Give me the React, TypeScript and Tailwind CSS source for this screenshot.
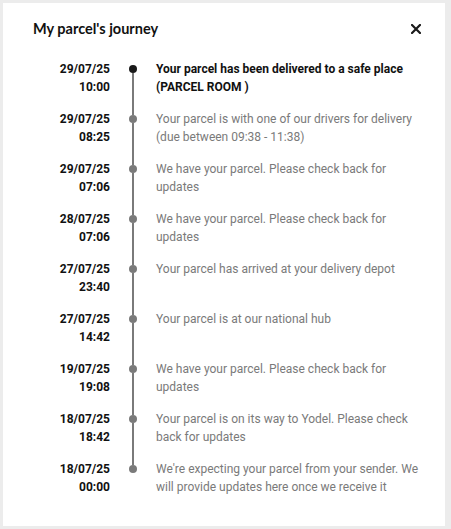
const events = [
  { date: "29/07/25", time: "10:00", text: "Your parcel has been delivered to a safe place (PARCEL ROOM )" },
  { date: "29/07/25", time: "08:25", text: "Your parcel is with one of our drivers for delivery (due between 09:38 - 11:38)" },
  { date: "29/07/25", time: "07:06", text: "We have your parcel. Please check back for updates" },
  { date: "28/07/25", time: "07:06", text: "We have your parcel. Please check back for updates" },
  { date: "27/07/25", time: "23:40", text: "Your parcel has arrived at your delivery depot" },
  { date: "27/07/25", time: "14:42", text: "Your parcel is at our national hub" },
  { date: "19/07/25", time: "19:08", text: "We have your parcel. Please check back for updates" },
  { date: "18/07/25", time: "18:42", text: "Your parcel is on its way to Yodel. Please check back for updates" },
  { date: "18/07/25", time: "00:00", text: "We're expecting your parcel from your sender. We will provide updates here once we receive it" },
];

export default function App() {
  return (
    <div className="min-h-screen bg-[#ececec] p-[3px] pb-[5px] font-['Roboto',sans-serif]">
      <div className="w-[442px] bg-white pl-[30px] pr-6 pt-4 pb-4">
        <div className="flex h-5 items-center justify-between">
          <h2 className="font-['Lato',sans-serif] text-[14.5px] font-bold leading-5 text-[#111]">
            My parcel's journey
          </h2>
          <button type="button" className="flex h-5 w-5 items-center justify-end" aria-label="Close">
            <svg width="10" height="10" viewBox="0 0 10 10">
              <path d="M1 1 L9 9 M9 1 L1 9" stroke="#1a1a1a" strokeWidth="2.2" strokeLinecap="square" />
            </svg>
          </button>
        </div>

        <ol className="mt-[21px]">
          {events.map((ev, i) => (
            <TimelineRow
              key={i}
              date={ev.date}
              time={ev.time}
              text={ev.text}
              first={i === 0}
              last={i === events.length - 1}
            />
          ))}
        </ol>
      </div>
    </div>
  );
}

function TimelineRow({
  date,
  time,
  text,
  first,
  last,
}: {
  date: string;
  time: string;
  text: string;
  first: boolean;
  last: boolean;
}) {
  return (
    <li className="flex text-[12px] leading-[18px]">
      <div className="w-[77px] shrink-0 pb-[14px] text-right font-bold text-[#111]">
        <div>{date}</div>
        <div>{time}</div>
      </div>
      <div className="flex w-[46px] shrink-0 flex-col items-center">
        <div className={`h-[5px] w-0.5 ${first ? "" : "bg-[#7a7a7a]"}`} />
        <div className={`h-2 w-2 rounded-full ${first ? "bg-[#1a1a1a]" : "bg-[#7a7a7a]"}`} />
        {!last && <div className="w-0.5 flex-1 bg-[#7a7a7a]" />}
      </div>
      <div
        className={`w-[266px] pb-[14px] ${first ? "font-bold text-[#111]" : "text-[#7a7a7a]"}`}
      >
        {text}
      </div>
    </li>
  );
}
